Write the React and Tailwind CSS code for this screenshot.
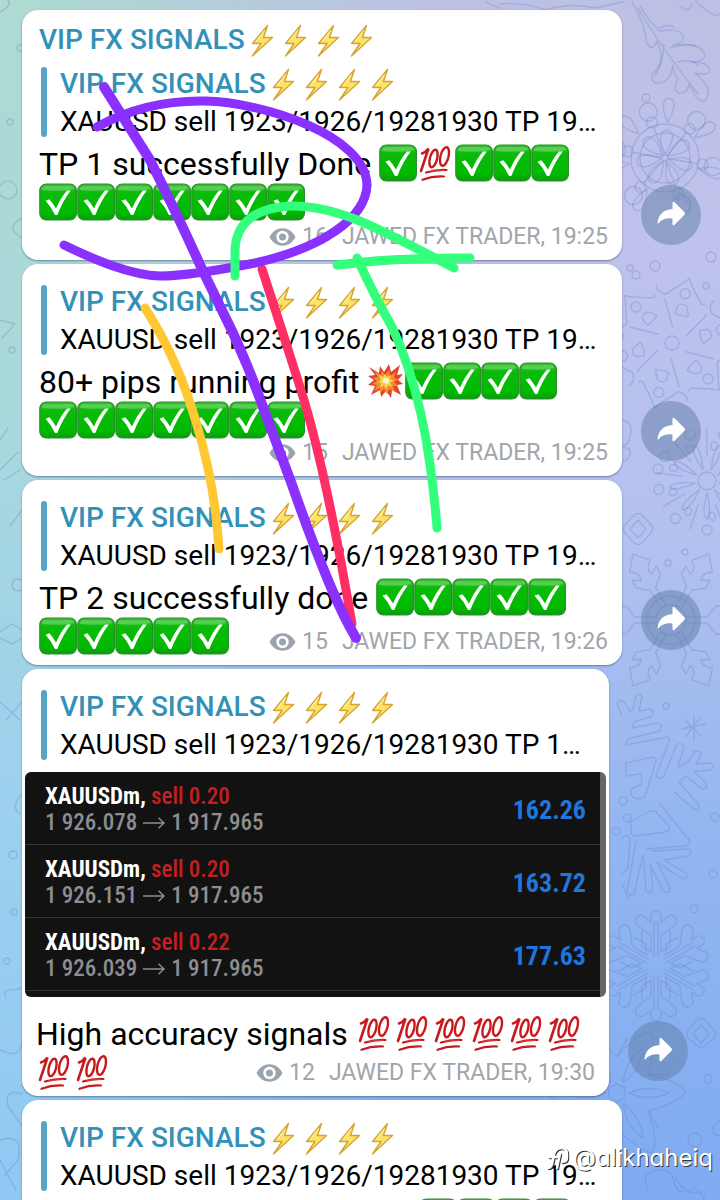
/**
 * App.jsx — Channel chat view with winter wallpaper.
 *
 * Layout:
 *   Column of message rows, each row = bubble + round share button
 *   Wallpaper sits behind the rows, pen marks and handle lie over them
 */

/* ── Emoji drawings ──────────────────────────────────────────────────────── */

const Check = () => (
  <svg className="h-[38px] w-[38px] shrink-0" viewBox="0 0 38 38" role="img" aria-label="check">
    <rect x="0.8" y="1" width="36.6" height="36" rx="6.5" fill="url(#checkFill)" stroke="#2a8f2c" strokeWidth="1.2" />
    <path d="M5 3.2h28q2 .3 2.2 3Q19 9 2.8 7 3 3.6 5 3.2z" fill="#fff" opacity="0.25" />
    <path d="M6.500 17.800L10.300 16.200Q14 20 17 25.500Q21.500 15 28 7.500H31.800Q24 17.500 18.300 32H16Q12 23.500 6.500 17.800z" fill="#fff" />
  </svg>
)

const Hundred = () => (
  <svg className="h-[38px] w-[38px] shrink-0" viewBox="0 0 38 38" role="img" aria-label="100" fill="none" stroke="#c8191c" strokeLinecap="round">
    <path d="M5 9.500Q8.500 8.500 11.500 4.500Q8 15 4 27" strokeWidth="2.600" />
    <ellipse cx="16.500" cy="14.500" rx="3.600" ry="9" strokeWidth="2.400" transform="rotate(14 16.500 14.500)" />
    <ellipse cx="27.500" cy="12.500" rx="4" ry="9.500" strokeWidth="2.400" transform="rotate(14 27.500 12.500)" />
    <path d="M9 28.500Q19 25.500 29.500 26" strokeWidth="2.200" />
    <path d="M5.500 35.800Q16 31.800 27 32.500" strokeWidth="2.200" />
    <path d="M13 27.600Q20 26 27 26.200" stroke="#ef5350" strokeWidth="0.600" />
  </svg>
)

const Boom = () => (
  <svg className="h-[38px] w-[38px] shrink-0" viewBox="0 0 38 38" role="img" aria-label="collision">
    <path d="M2 5l10 6 1-7 4 6 5-8 2 8 9-7-3 10 6-1-5 6 5 4-6 1 4 10-9-5-1 8-5-7-5 6-1-7-9 5 4-9-7-1 6-5-6-4 7-1z" fill="#e0452b" />
    <path d="M7 9l7 4 1-4 3 4 4-5 1 6 6-4-2 6 4 1-4 3 4 4-5 0 2 6-6-3-2 5-3-5-4 4 0-5-6 3 3-6-5-1 5-3-4-3 5-1z" fill="#f78b34" />
    <path d="M12 13l4 2 2-3 2 3 4-2-1 4 4 2-4 1 2 5-4-2-2 4-2-4-4 3 1-5-4-1 4-2z" fill="#fdd64b" />
    <circle cx="19" cy="19" r="3" fill="#fff6c4" />
  </svg>
)

const Bolt = () => (
  <svg className="h-[33px] w-[33px] shrink-0" viewBox="0 0 33 33" role="img" aria-label="high voltage">
    <path d="M22.500 1.500L7.500 19.500h8.500L7.500 32 27.500 13.500h-9z" fill="#fbe268" stroke="#d8a430" strokeWidth="1.400" strokeLinejoin="round" />
    <path d="M19.500 6.500l-8 10.500" stroke="#fff6c0" strokeWidth="1" />
  </svg>
)

const EyeIcon = () => (
  <svg className="h-[18px] w-[27px]" viewBox="0 0 27 18" aria-hidden="true">
    <path d="M.5 9C3.500 3.500 8 .3 13.500 .3S23.500 3.500 26.500 9C23.500 14.500 19 17.700 13.500 17.700S3.500 14.500 .5 9z" fill="#9ba4ac" />
    <circle cx="13.500" cy="9" r="6.200" fill="#fff" />
    <circle cx="13.500" cy="9" r="3.500" fill="#9ba4ac" />
  </svg>
)

const ShareIcon = () => (
  <svg className="size-[60px]" viewBox="-30 -30 60 60" aria-hidden="true">
    <path d="M-13.500 8Q-12-5 1.500-6V-12.500Q2-14 3.500-12.800L13.500-2.800Q14.500-1.500 13.500-.3L3.500 9.800Q2 11 1.500 9.500V3.500Q-8 2.500-12.500 8.200-13.300 9-13.500 8z" fill="#fff" />
  </svg>
)

const emoji = { ok: Check, hundred: Hundred, boom: Boom }

/* ── Messages ────────────────────────────────────────────────────────────── */

const ok = (n) => Array(n).fill('ok')

const messages = [
  {
    id: 1,
    sender: true,
    quote: 'XAUUSD sell 1923/1926/19281930 TP 19…',
    lines: [
      { text: 'TP 1 successfully Done ', icons: ['ok', 'hundred', ...ok(3)] },
      { icons: ok(7) },
    ],
    views: 16,
    time: '19:25',
    metaClass: 'mt-0.5',
  },
  {
    id: 2,
    quote: 'XAUUSD sell 1923/1926/19281930 TP 19…',
    lines: [
      { text: '80+ pips running profit ', icons: ['boom', ...ok(4)] },
      { icons: ok(7) },
    ],
    views: 15,
    time: '19:25',
    metaClass: '',
  },
  {
    id: 3,
    quote: 'XAUUSD sell 1923/1926/19281930 TP 19…',
    lines: [
      { text: 'TP 2 successfully done ', icons: ok(5) },
      { icons: ok(5) },
    ],
    views: 15,
    time: '19:26',
    metaClass: '-mt-[27px]',
  },
  {
    id: 4,
    quote: 'XAUUSD sell 1923/1926/19281930 TP 1…',
    trades: [
      { side: 'sell 0.20', from: '1 926.078', to: '1 917.965', profit: '162.26' },
      { side: 'sell 0.20', from: '1 926.151', to: '1 917.965', profit: '163.72' },
      { side: 'sell 0.22', from: '1 926.039', to: '1 917.965', profit: '177.63' },
    ],
    lines: [
      { text: 'High accuracy signals ', icons: Array(6).fill('hundred') },
      { icons: Array(2).fill('hundred') },
    ],
    views: 12,
    time: '19:30',
    metaClass: '-mt-8',
  },
  {
    id: 5,
    quote: 'XAUUSD sell 1923/1926/19281930 TP 19…',
    lines: [{ icons: ok(4), end: true }],
  },
]

const Title = () => (
  <div className="flex items-center text-[28px] font-medium whitespace-nowrap text-[#3391b8]">
    <span>VIP FX SIGNALS</span>
    <Bolt /><Bolt /><Bolt /><Bolt />
  </div>
)

function Quote({ text }) {
  return (
    <blockquote className="ml-0.5 flex h-[70px] gap-[13px]">
      <span className="w-1.5 shrink-0 rounded-full bg-[#57a4c4]" />
      <div className="-mt-0.5 -mb-1 min-w-0 leading-[38px]">
        <Title />
        <p className="text-[28px] whitespace-nowrap text-black">{text}</p>
      </div>
    </blockquote>
  )
}

function Trades({ rows }) {
  return (
    <div className="mx-[3px] mt-3 overflow-hidden rounded-md border-r-[6px] border-[#666] bg-[#121212] pb-1.5 font-['Roboto_Condensed','Liberation_Sans_Narrow',Roboto,sans-serif]">
      {rows.map((row) => (
        <div key={row.from} className="flex h-[73px] items-center justify-between border-b border-[#333] pr-3.5 pl-5">
          <div className="pt-1 text-[23px] leading-[26px] whitespace-nowrap">
            <p className="font-bold text-white">
              XAUUSDm, <span className="font-medium text-[#c42023]">{row.side}</span>
            </p>
            <p className="flex items-center gap-1.5 font-medium text-[#8d8d92]">
              {row.from}
              <svg className="h-3 w-[22px]" viewBox="0 0 22 12" fill="none" stroke="#8d8d92" strokeWidth="1.500" aria-hidden="true">
                <path d="M0 6h21M15.500 .8L21 6l-5.500 5.200" />
              </svg>
              {row.to}
            </p>
          </div>
          <span className="pt-1 text-[26px] font-bold text-[#2175dc]">{row.profit}</span>
        </div>
      ))}
    </div>
  )
}

function Message({ msg }) {
  return (
    <article className={`flex items-end gap-[19px] pl-[22px] ${msg.trades ? 'pr-8' : 'pr-[19px]'}`}>
      <div className="flex min-w-0 flex-1 flex-col rounded-2xl bg-white pt-[21px] pb-[9px] shadow-[0_1px_2px_rgba(60,80,110,0.6)]">
        <div className="px-[17px]">
          {msg.sender && (
            <header className="-mt-[9px] mb-[9px] leading-9">
              <Title />
            </header>
          )}
          <Quote text={msg.quote} />
        </div>
        {msg.trades && <Trades rows={msg.trades} />}
        <div className={msg.trades ? 'mt-4 px-3.5' : 'mt-1.5 px-[17px]'}>
          {msg.lines.map((line, i) => (
            <div key={i} className={`flex h-[39px] items-center text-[32px] text-black ${line.end ? 'justify-end pr-[34px]' : ''}`}>
              {line.text && <span className="pt-0.5 whitespace-pre">{line.text}</span>}
              {line.icons.map((name, j) => {
                const Icon = emoji[name]
                return <Icon key={j} />
              })}
            </div>
          ))}
        </div>
        {msg.views && (
          <footer className={`mr-3.5 flex h-7 items-center self-end text-[23px] whitespace-nowrap text-[#a0a5aa] ${msg.metaClass}`}>
            <EyeIcon />
            <span className="ml-1.5">{msg.views}</span>
            <span className="ml-3.5">JAWED FX TRADER, {msg.time}</span>
          </footer>
        )}
      </div>
      {msg.views ? (
        <button type="button" aria-label="Share" className="mb-[15px] size-[60px] shrink-0 rounded-full bg-[rgba(95,125,165,0.5)]">
          <ShareIcon />
        </button>
      ) : (
        <span className="w-[60px] shrink-0" />
      )}
    </article>
  )
}

/* ── Wallpaper ───────────────────────────────────────────────────────────── */

const spokes = (n) => Array.from({ length: n }, (_, i) => (i * 360) / n)

function Wallpaper() {
  return (
    <svg className="absolute inset-0 -z-10 h-full w-full" viewBox="0 0 720 1200" preserveAspectRatio="xMaxYMin slice" aria-hidden="true">
      <defs>
        <linearGradient id="checkFill" x1="0" y1="0" x2="0" y2="1">
          <stop offset="0" stopColor="#35c02f" />
          <stop offset="0.250" stopColor="#0abb0a" />
          <stop offset="0.800" stopColor="#00ba00" />
          <stop offset="1" stopColor="#0b9a10" />
        </linearGradient>
        <linearGradient id="left" x1="0" y1="0" x2="0" y2="1">
          <stop offset="0" stopColor="#aedad2" />
          <stop offset="0.350" stopColor="#a9d8dc" />
          <stop offset="0.650" stopColor="#9dd1ee" />
          <stop offset="1" stopColor="#90c8f4" />
        </linearGradient>
        <linearGradient id="right" x1="0" y1="0" x2="0" y2="1">
          <stop offset="0" stopColor="#bcc0e4" />
          <stop offset="0.200" stopColor="#bfc2ec" />
          <stop offset="0.450" stopColor="#b3c1ef" />
          <stop offset="0.700" stopColor="#92b6f0" />
          <stop offset="1" stopColor="#80abf2" />
        </linearGradient>
        <linearGradient id="fade">
          <stop offset="0.050" stopColor="#000" />
          <stop offset="0.600" stopColor="#fff" />
        </linearGradient>
        <mask id="toRight"><rect width="720" height="1200" fill="url(#fade)" /></mask>
      </defs>
      <rect width="720" height="1200" fill="url(#left)" />
      <rect width="720" height="1200" fill="url(#right)" mask="url(#toRight)" />

      <g fill="none" stroke="#6d7fc4" strokeOpacity="0.320" strokeWidth="1.400" strokeLinejoin="round" strokeLinecap="round">
        {/* branch */}
        <path d="M632 2q12 18 15 42q6 8 10-3q5 12 4 18q-2 10-8 14q-4 11 8 10q10-3 12-18q1 12 5 14q-6 12 1 14q9 1 10-9l7 13q9 9 12-2q2-9-13-22q16 4 14-5q-2-6-18-6q12 0 14-6q-2-14-32-11q12-2 10-9q-3-8-23-5Q648 20 640 6" />
        <path d="M638 8q22 38 60 86M660 28q12-5 14 0M670 48q18-5 26-2M664 45q-1 20-9 30M678 62q14-3 20 3" />
        <path d="M500 4q25-2 45 6q25-8 50-2l28-6M695 0q20 20 25 14M680 6q10 8 12-2M500 8q-8-2-14-6" />

        {/* wheel */}
        <g transform="translate(665 158)">
          <circle r="34" /><circle r="25" /><circle r="3" />
          {spokes(7).map((a) => (
            <g key={a} transform={`rotate(${a + 4})`}>
              <path d="M0-4Q-9-20-4-26Q0-30 5-26Q9-20 0-4zM0-36Q-8-52-4-58Q0-62 4-58Q8-52 0-36z" />
            </g>
          ))}
          {spokes(6).map((a) => (
            <g key={a} transform={`rotate(${a + 40})`}>
              <circle cy="-38" r="5.500" /><circle cy="-49" r="9" /><path d="M0-4V-32" />
            </g>
          ))}
        </g>

        {/* pointed star */}
        <g transform="translate(672 343)">
          <circle r="7" />
          {spokes(6).map((a) => (
            <g key={a} transform={`rotate(${a + 15})`}>
              <path d="M0-67Q-3-62-15-50Q-18-44-22-46Q-28-46-30-52M0-67Q6-58 16-48Q19-43 22-46" />
              <path d="M-4-38Q0-42 5-39L9-30Q0-28-5-30zM12-11L26-36" />
              <circle cy="-51" r="5" />
            </g>
          ))}
        </g>

        {/* burst */}
        <g transform="translate(707 481)">
          <circle r="9" />
          {spokes(9).map((a) => (
            <g key={a} transform={`rotate(${a + 20})`}>
              <path d="M0-12Q-5-32 0-38Q6-34 0-12z" /><circle cy="-49" r="5" />
              <path d="M9-24L17-48M17-34q6-2 5 5q-4 5-7 0z" />
            </g>
          ))}
        </g>
        <path d="M622 420q12 2 8 16q-2 10-8 10M622 448q9-2 8 6q-3 8-8 7" />

        {/* diamonds */}
        <path d="M634 515q4-3 8 0l9 10q3 4 0 8l-9 10q-4 3-8 0l-9-10q-3-4 0-8zM638 520l8 9-8 9-8-9z" />
        <path d="M697 1020q4-3 8 0l9 10q3 4 0 8l-9 8q-4 3-8 0l-9-8q-3-4 0-8zM701 1025l8 9-8 9-8-9z" />

        {/* crystal */}
        <g transform="translate(671 620)">
          <circle r="24" /><circle r="15" />
          {spokes(6).map((a) => (
            <g key={a} transform={`rotate(${a + 30})`}>
              <path d="M-3-16V-36l-11-9v-9l8 5q3-8-6-13L0-76 12-62q-9 5-6 13l8-5v9l-11 9V-16" />
            </g>
          ))}
        </g>

        {/* small star */}
        <path d="M694 716v24M682 729l24-5M685 720l16 16M700 718l-14 18" />

        {/* fir flake */}
        <path d="M622 716L617 704Q620 698 625 703L630 712L633 709L636 696Q640 692 642 697L639 711L650 709Q655 711 652 716L634 722L632 728L658 723Q664 726 660 731L628 739L625 745L668 737Q670 740 668 744L656 776Q660 780 664 776L676 746Q680 741 684 746L678 767L688 762L694 752Q700 749 701 755L696 764L711 763Q716 766 711 770L694 772L706 783Q708 789 702 789L686 776L679 782L699 805Q701 812 694 809L674 792" />
        <path d="M626 763L653 757Q658 759 655 764L645 797Q640 800 634 798Q628 792 633 788L642 784L641 774L626 776zM630 822L650 811Q655 810 658 814L669 826Q671 831 665 832L634 836Q628 832 632 828zM660 804L690 841Q690 845 684 846L646 849M652 851L688 849Q693 852 689 856L664 860L686 873Q689 879 683 879L657 862L670 888Q669 895 663 891L650 864L653 888Q650 896 646 891L643 855M643 855L634 894Q630 897 627 891L636 842M622 838Q628 833 630 840L628 868L622 874M622 884L628 898" />

        {/* round snowflake */}
        <g transform="translate(656 966)">
          {spokes(6).map((a) => (
            <g key={a} transform={`rotate(${a})`}>
              <path d="M-2-10V-44M2-10V-44M-5-14L-5-30L-20-42Q-22-50-14-51L-5-44V-52Q0-58 5-52V-44L14-51Q22-50 20-42L5-30V-14M-5-14L-14-20V-34M5-14L14-20V-34" />
            </g>
          ))}
        </g>

        {/* petal star */}
        <g transform="translate(617 1093)">
          <path d="M0-9l8 4v9l-8 5-8-5v-9z" />
          {spokes(6).map((a) => (
            <g key={a} transform={`rotate(${a + 30})`}>
              <path d="M0-12Q-9-32 0-52Q9-32 0-12zM-18-32Q-12-64 0-69Q10-60 18-32L36-42" />
            </g>
          ))}
        </g>
        <path d="M648 1190q-8-16 8-20q16-2 18 12q4 16 20 6q12 8 10 12M720 1120q-10 6-6 14l6 2M676 1178q8 18 26 14" />
        <circle cx="695" cy="1140" r="7" />

        {/* dots */}
        {[[646, 98, 4], [711, 257, 5], [655, 266, 5], [630, 268, 3], [636, 275, 4], [706, 286, 3], [658, 469, 5], [685, 552, 3], [668, 563, 3], [666, 706, 3], [623, 801, 4], [627, 818, 4], [616, 831, 4], [715, 817, 4], [713, 874, 4], [694, 909, 4], [708, 1079, 4], [8, 190, 9], [10, 122, 3], [20, 48, 3], [12, 350, 3], [18, 585, 6], [13, 855, 4], [14, 912, 3], [7, 961, 3]].map(([x, y, r]) => (
          <circle key={`${x}-${y}`} cx={x} cy={y} r={r} />
        ))}

        {/* left edge */}
        <path d="M0 12q12-6 8-12M22 218q-12 6-8 14l8 6M0 320l15 4-13 14M0 440l8-12M0 470l18-18M4 480l16-10M10 526l12-16M0 632l12-8 10 6M0 638l12 6 10-6M0 702l20 18M22 702l-16 18M22 794q-12 14-2 20M6 998q-4-10 8-8l8-2M0 1050q20 10 22-8M22 1094q-18-6-14 12l14 20M0 1140q24-8 18 20l-14 16M0 1160l16 30" />
      </g>
    </svg>
  )
}

/* ── Pen marks over the chat ─────────────────────────────────────────────── */

const PenMarks = () => (
  <svg className="pointer-events-none absolute top-0 left-0 h-[1200px] w-[720px]" viewBox="0 0 720 1200" fill="none" strokeLinecap="round" strokeLinejoin="round" aria-hidden="true">
    <path d="M145 308C172 350 186 388 197 425C208 462 216 500 219 549" stroke="#ffc832" strokeWidth="9" />
    <path d="M262 269Q281 327 300 387C320 450 336 530 352 624" stroke="#ff2f66" strokeWidth="9" />
    <path d="M104 87L150 160Q180 220 201 267L233 333Q250 370 263 407L291 482Q312 542 330 585Q344 618 356 638" stroke="#8a30ff" strokeWidth="10" />
    <path d="M97 127Q145 100 205 101C262 102 366 135 367 185C366 218 322 248 255 263C215 271 185 276 160 276C130 275 95 260 64 245" stroke="#8a30ff" strokeWidth="9" />
    <path d="M235 276V250C236 222 256 208 290 206C340 205 385 232 454 268" stroke="#33ff7d" strokeWidth="9" />
    <path d="M337 265Q400 257 470 258" stroke="#33ff7d" strokeWidth="9" />
    <path d="M357 258Q375 297 392 327C416 378 430 440 437 528" stroke="#33ff7d" strokeWidth="9" />
  </svg>
)

const Watermark = () => (
  <div className="absolute right-[7px] bottom-[26px] flex items-center gap-1 font-[Inter,sans-serif] text-[24px] leading-8 text-white [font-feature-settings:'cv11'] [text-shadow:1px_1px_0_#333]">
    <svg className="h-6 w-[22px] drop-shadow-[1px_1px_0_#333]" viewBox="0 0 22 24" fill="none" stroke="#fff" strokeWidth="2.400" strokeLinecap="round" aria-hidden="true">
      <path d="M1 22Q5 22 6 14Q7 2 14 2Q20 2 20 8V12Q20 16 15 16M2 11h8M13 8l-3 14" />
    </svg>
    <span>@alikhaheiq</span>
  </div>
)

export default function App() {
  return (
    <div className="relative isolate h-screen overflow-hidden font-[Roboto,sans-serif]">
      <Wallpaper />
      <main className="flex flex-col gap-1 pt-2.5">
        {messages.map((msg) => (
          <Message key={msg.id} msg={msg} />
        ))}
      </main>
      <PenMarks />
      <Watermark />
    </div>
  )
}
